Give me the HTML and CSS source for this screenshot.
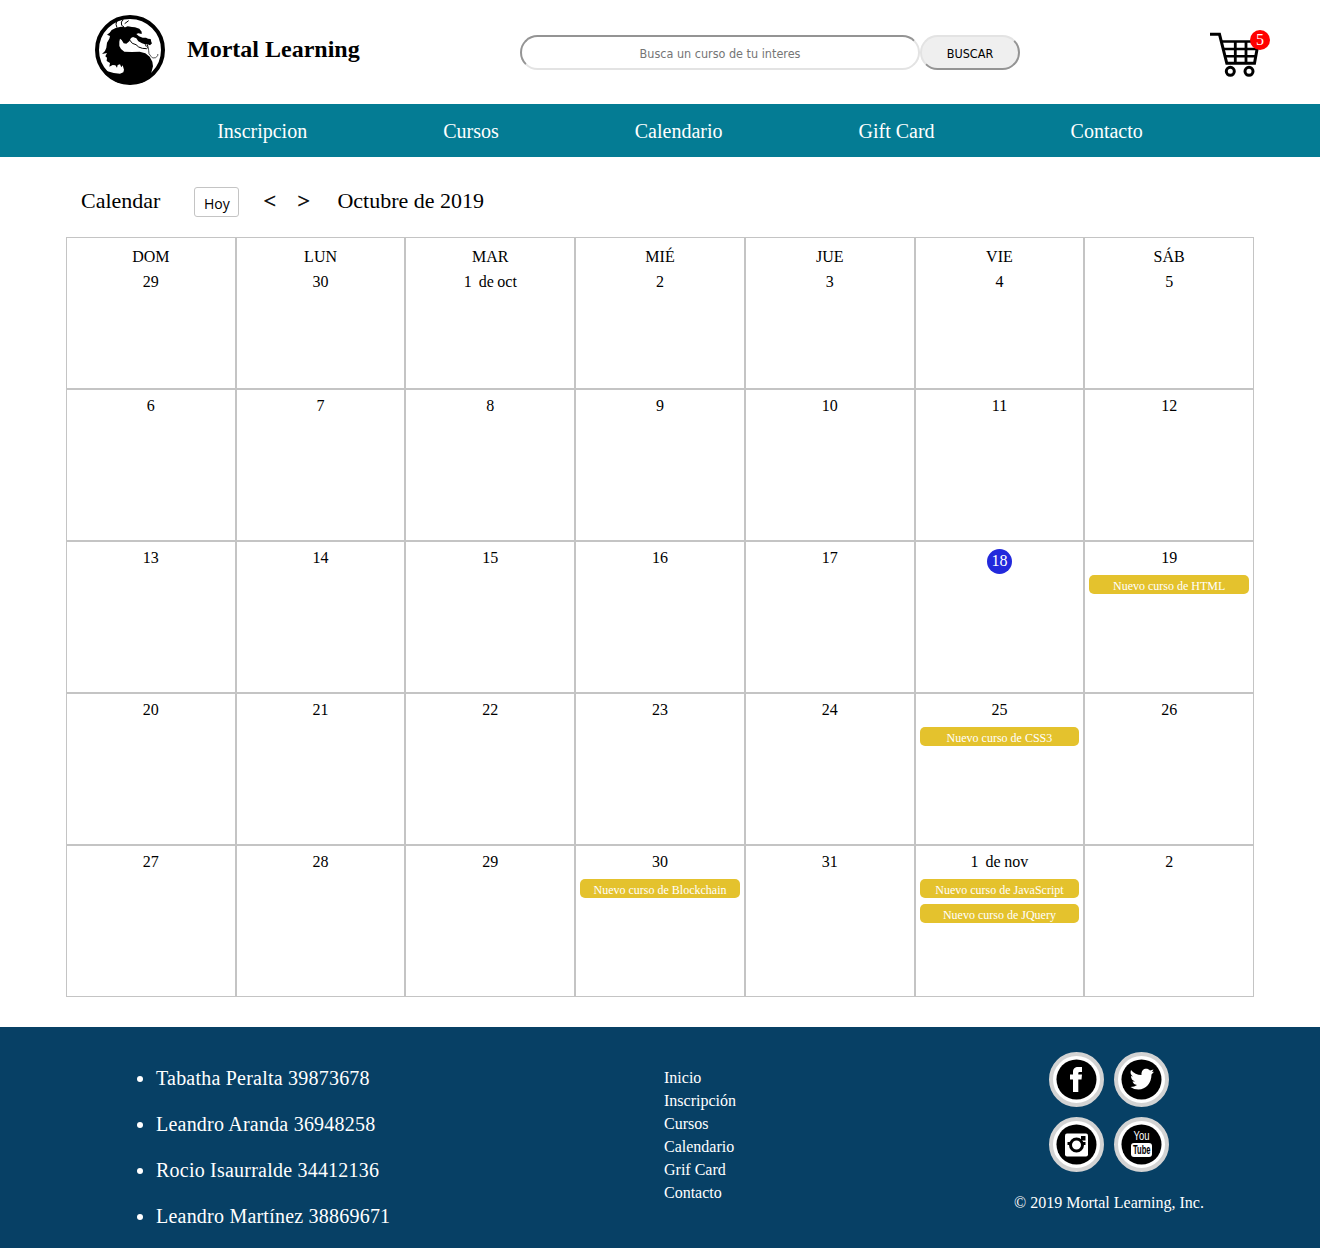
FILE: index.html
```html
<!DOCTYPE html>
<html lang="es">
<head>
<meta charset="utf-8">
<title>Mortal Learning</title>
<link rel="stylesheet" href="styles.css">
</head>
<body>
<header class="top">
  <svg class="logo" viewBox="30 30 210 210" aria-hidden="true">
    <circle cx="135" cy="135" r="99" fill="#fff" stroke="#000" stroke-width="12"/>
    <path d="M66 89 L74 83 L80 75 L92 69 L108 65 L121 67 L128 64 L141 66 L150 67 L163 71 L170 80 L170 87 L160 85 L154 87 L162 94 L173 98 L183 98 L189 101 L197 102 L199 111 L201 115 L195 121 L188 118 L180 118 L171 115 L160 109 L154 100 L144 96 L138 99 L133 109 L124 116 L116 115 L110 105 L105 101 L103 110 L103 123 L108 132 L118 140 L140 141 L164 140 L181 145 L194 155 L202 170 L204 184 L198 206 L200 213 L170 234 L135 238 L100 234 L66 212 L44 187 L65 198 L86 204 L105 206 L115 202 L117 194 L113 181 L109 187 L105 178 L98 180 L96 188 L91 181 L83 180 L73 185 L75 174 L65 168 L66 158 L61 154 L66 144 L51 147 L60 138 L64 128 L66 113 L73 101 L75 93 Z"/>
    <g fill="none" stroke="#000" stroke-width="3">
      <path d="M96 68 L93 58 L95 49 L102 44 M117 66 L110 61 L109 51 L115 44 M119 56 L131 47"/>
      <path d="M134 105 L142 115 L153 119 L161 126 L172 130 L185 131 L189 127 L187 118 M181 118 L184 125"/>
      <path stroke-width="2" d="M190 127 L191 137 L192 146 L198 154 L203 159 L212 158 L219 151 L218 147"/>
    </g>
  </svg>
  <h1 class="brand">Mortal Learning</h1>
  <form class="search">
    <input class="search-input" type="text" placeholder="Busca un curso de tu interes">
    <button class="search-button" type="button">BUSCAR</button>
  </form>
  <div class="cart">
    <svg width="50" height="46" viewBox="0 0 50 46" fill="none" stroke="#000">
      <path d="M0 2.300 H9.500 L16.800 31.300 H44.500 L48 12" stroke-width="3"/>
      <path d="M11 9.500 H48 M13 17 H47 M15 24.300 H46" stroke-width="2.600"/>
      <path d="M25.300 9 V31 M36 9 V31" stroke-width="2.800"/>
      <circle cx="20.300" cy="39.300" r="4" stroke-width="3"/>
      <circle cx="39" cy="39.300" r="4" stroke-width="3"/>
    </svg>
    <span class="badge">5</span>
  </div>
</header>
<nav class="nav"><a>Inscripcion</a><a>Cursos</a><a>Calendario</a><a>Gift Card</a><a>Contacto</a></nav>
<main class="main">
  <div class="toolbar">
    <span>Calendar</span>
    <button class="today" type="button">Hoy</button>
    <span class="arrow prev">&lt;</span>
    <span class="arrow next">&gt;</span>
    <span>Octubre de 2019</span>
  </div>
  <div class="grid">
    <div class="day"><p>DOM</p><p>29</p></div>
    <div class="day"><p>LUN</p><p>30</p></div>
    <div class="day"><p>MAR</p><p class="month-start">1&nbsp; de oct</p></div>
    <div class="day"><p>MIÉ</p><p>2</p></div>
    <div class="day"><p>JUE</p><p>3</p></div>
    <div class="day"><p>VIE</p><p>4</p></div>
    <div class="day"><p>SÁB</p><p>5</p></div>
    <div class="day"><p>6</p></div>
    <div class="day"><p>7</p></div>
    <div class="day"><p>8</p></div>
    <div class="day"><p>9</p></div>
    <div class="day"><p>10</p></div>
    <div class="day"><p>11</p></div>
    <div class="day"><p>12</p></div>
    <div class="day"><p>13</p></div>
    <div class="day"><p>14</p></div>
    <div class="day"><p>15</p></div>
    <div class="day"><p>16</p></div>
    <div class="day"><p>17</p></div>
    <div class="day"><p class="current">18</p></div>
    <div class="day"><p>19</p><div class="event">Nuevo curso de HTML</div></div>
    <div class="day"><p>20</p></div>
    <div class="day"><p>21</p></div>
    <div class="day"><p>22</p></div>
    <div class="day"><p>23</p></div>
    <div class="day"><p>24</p></div>
    <div class="day"><p>25</p><div class="event">Nuevo curso de CSS3</div></div>
    <div class="day"><p>26</p></div>
    <div class="day"><p>27</p></div>
    <div class="day"><p>28</p></div>
    <div class="day"><p>29</p></div>
    <div class="day"><p>30</p><div class="event">Nuevo curso de Blockchain</div></div>
    <div class="day"><p>31</p></div>
    <div class="day"><p class="month-start">1&nbsp; de nov</p><div class="event">Nuevo curso de JavaScript</div><div class="event">Nuevo curso de JQuery</div></div>
    <div class="day"><p>2</p></div>
  </div>
</main>
<footer class="footer">
  <ul class="team">
    <li>Tabatha Peralta 39873678</li>
    <li>Leandro Aranda 36948258</li>
    <li>Rocio Isaurralde 34412136</li>
    <li>Leandro Martínez 38869671</li>
  </ul>
  <div class="links"><a>Inicio</a><a>Inscripción</a><a>Cursos</a><a>Calendario</a><a>Grif Card</a><a>Contacto</a></div>
  <div class="contact">
    <div class="social">
      <svg class="icon" viewBox="0 0 55 55"><circle class="rim" cx="27.500" cy="27.500" r="25.500"/><circle cx="27.500" cy="27.500" r="20"/>
        <path fill="#fff" d="M24 40 V27.500 H21 V22.500 H24 V20 C24 16.500 26 15 29 15 H33 V20 H30.500 Q29.300 20 29.300 21 V22.500 H33 L32.500 27.500 H29.300 V40 Z"/></svg>
      <svg class="icon" viewBox="0 0 55 55"><circle class="rim" cx="27.500" cy="27.500" r="25.500"/><circle cx="27.500" cy="27.500" r="20"/>
        <path fill="#fff" d="M17 18 Q21 23 27.500 23 C27 16 33.500 15.500 36 18.500 L39.500 17.500 L38 20 L40 19.800 L37.500 22.500 C37.500 31 32 37.500 24.500 37.500 Q20 37.500 16.500 35 Q20.500 35 23 33 Q19.500 32.500 18.500 29.500 H21 Q17 28 17 24 L19 24.500 Q15.500 22 17 18 Z"/></svg>
      <svg class="icon" viewBox="0 0 55 55"><circle class="rim" cx="27.500" cy="27.500" r="25.500"/><circle cx="27.500" cy="27.500" r="20"/>
        <rect x="16" y="16.500" width="23" height="23" rx="2" fill="#fff"/><rect x="32" y="19" width="4.500" height="4.500"/>
        <circle cx="27.500" cy="28" r="6" fill="none" stroke="#000" stroke-width="3"/>
        <path d="M18.500 25 H22 L21 28 H18.500 Z M33 25 H36.500 V28 H34 Z"/></svg>
      <svg class="icon" viewBox="0 0 55 55"><circle class="rim" cx="27.500" cy="27.500" r="25.500"/><circle cx="27.500" cy="27.500" r="20"/>
        <text class="yt" x="19.500" y="23" textLength="16" lengthAdjust="spacingAndGlyphs" fill="#fff">You</text>
        <rect x="17" y="26" width="21" height="14" rx="3" fill="#fff"/>
        <text class="yt yt-bold" x="19" y="37" textLength="17.500" lengthAdjust="spacingAndGlyphs">Tube</text></svg>
    </div>
    <p class="copy">© 2019 Mortal Learning, Inc.</p>
  </div>
</footer>
</body>
</html>
```
FILE: styles.css
```css
* { box-sizing: border-box; }
body { margin: 0; background: #fff; color: #000; font: 16px/18px "Liberation Serif", serif; }
p { margin: 0; }

.top { height: 104px; display: flex; align-items: flex-start; }
.logo { width: 70px; height: 70px; margin: 15px 0 0 95px; flex: none; }
.brand { margin: 35px 0 0 22px; width: 333px; font-size: 24px; line-height: 28px; }
.search { display: flex; margin-top: 35px; }
.search-input, .search-button { height: 35px; border-radius: 20px; font: 12.5px "DejaVu Sans Condensed", "DejaVu Sans", sans-serif; text-align: center; border: 2px solid; }
.search-input { width: 400px; padding: 2px 2px 0; background: #fff; border-color: #949494 #e3e3e3 #e3e3e3 #949494; }
.search-input::placeholder { color: #757575; }
.search-button { width: 100px; padding: 2px 6px 0; background: #efefef; color: #000; border-color: #e3e3e3 #949494 #949494 #e3e3e3; }
.cart { position: relative; margin: 32px 0 0 190px; width: 60px; height: 46px; }
.badge { position: absolute; top: -2px; right: 0; width: 20px; height: 20px; border-radius: 50%; background: #f00; color: #fff; text-align: center; line-height: 19px; }

.nav { height: 53px; padding-left: 40px; background: #047c94; color: #fff; display: flex; justify-content: center; align-items: center; gap: 136px; font-size: 20px; }

.main { padding: 30px 66px; height: 870px; }
.toolbar { height: 50px; display: flex; align-items: flex-start; padding-left: 15px; font-size: 22px; line-height: 28px; }
.today { width: 45px; height: 30px; margin: 0 24px 0 34px; padding: 2px 0 0; background: #fff; border: 1px solid #c4c4c4; border-radius: 3px; color: #000; font: 14px "Open Sans", sans-serif; }
.arrow { -webkit-text-stroke: 0.5px #000; }
.prev { width: 34px; }
.next { width: 40px; }
.grid { display: grid; grid-template-columns: repeat(7, 1fr); grid-auto-rows: 152px; }
.day { border: 1px solid #c4c4c4; padding: 7px 4px 0; text-align: center; }
.day p + p { margin-top: 7px; }
.day:nth-child(-n+7) { padding-top: 10px; }
.month-start { word-spacing: -0.5px; }
.current { width: 25px; height: 25px; margin: 0 auto; border-radius: 50%; background: #2229dc; color: #fff; line-height: 24px; }
.event { height: 19px; margin-top: 8px; border-radius: 5px; background: #e4c22d; color: #fff; font-size: 12px; line-height: 22px; }
.event + .event { margin-top: 6px; }

.footer { height: 221px; background: #074065; color: #fff; display: flex; align-items: flex-start; overflow: hidden; }
.team { width: 664px; margin: 0; padding: 28px 0 0 156px; font-size: 20px; line-height: 46px; letter-spacing: 0.22px; }
.links { width: 350px; padding-top: 39px; display: flex; flex-direction: column; line-height: 23px; }
.contact { width: 190px; padding-top: 25px; text-align: center; white-space: nowrap; }
.social { display: grid; grid-template-columns: 55px 55px; gap: 10px; justify-content: center; }
.icon { width: 55px; height: 55px; display: block; }
.rim { fill: #fff; stroke: #d3d3d3; stroke-width: 4px; }
.yt { font: 12px "Liberation Sans", sans-serif; }
.yt-bold { font-weight: bold; }
.copy { margin-top: 22px; }
```
